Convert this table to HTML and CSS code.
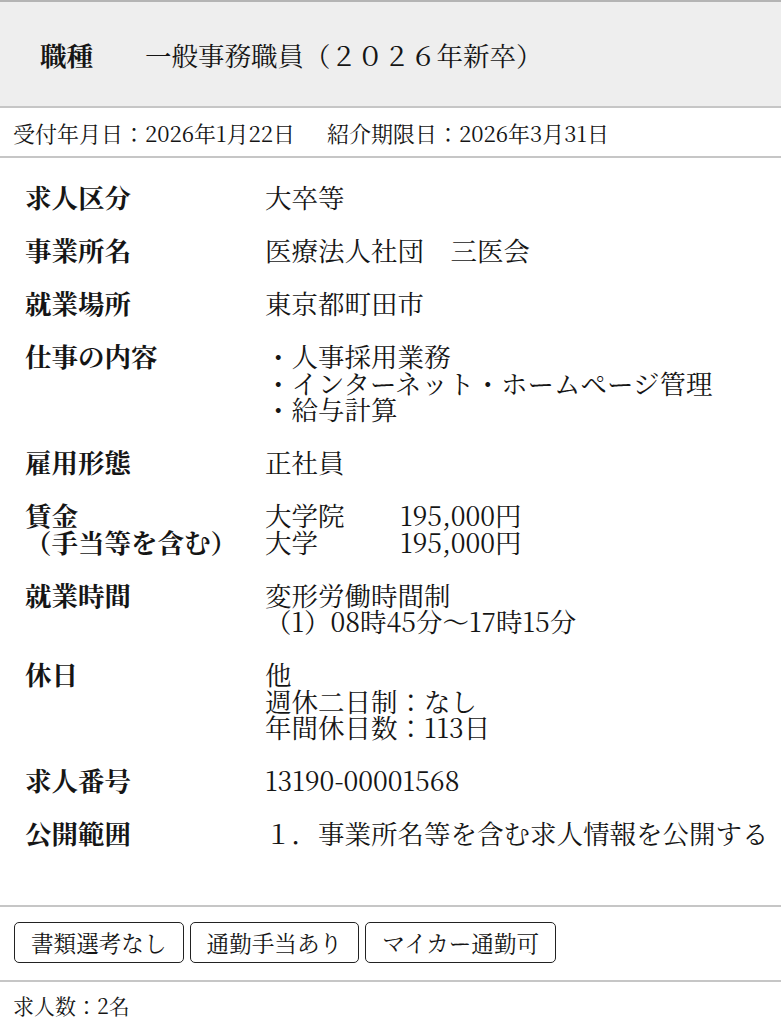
FILE: index.html
```html
<!DOCTYPE html>
<html lang="ja">
<head>
<meta charset="utf-8">
<title>求人情報</title>
<link rel="stylesheet" href="styles.css">
</head>
<body>
<div class="card">
  <div class="title">
    <span class="title-label">職種</span>
    <span class="title-value">一般事務職員（２０２６年新卒）</span>
  </div>
  <div class="dates">
    <span>受付年月日：2026年1月22日</span>
    <span class="date-second">紹介期限日：2026年3月31日</span>
  </div>
  <div class="details">
    <div class="label">求人区分</div>
    <div class="value">大卒等</div>

    <div class="label">事業所名</div>
    <div class="value">医療法人社団　三医会</div>

    <div class="label">就業場所</div>
    <div class="value">東京都町田市</div>

    <div class="label">仕事の内容</div>
    <div class="value">・人事採用業務<br>・インターネット・ホームページ管理<br>・給与計算</div>

    <div class="label">雇用形態</div>
    <div class="value">正社員</div>

    <div class="label">賃金<br>（手当等を含む）</div>
    <div class="value">
      <div class="wage"><span class="wage-name">大学院</span><span>195,000円</span></div>
      <div class="wage"><span class="wage-name">大学</span><span>195,000円</span></div>
    </div>

    <div class="label">就業時間</div>
    <div class="value">変形労働時間制<br>（1）08時45分〜17時15分</div>

    <div class="label">休日</div>
    <div class="value">他<br>週休二日制：なし<br>年間休日数：113日</div>

    <div class="label">求人番号</div>
    <div class="value">13190-00001568</div>

    <div class="label">公開範囲</div>
    <div class="value">１．事業所名等を含む求人情報を公開する</div>
  </div>
  <div class="tags">
    <span class="tag">書類選考なし</span>
    <span class="tag">通勤手当あり</span>
    <span class="tag">マイカー通勤可</span>
  </div>
  <div class="count">求人数：2名</div>
</div>
</body>
</html>
```
FILE: styles.css
```css
html, body {
  margin: 0;
  padding: 0;
  background: #ffffff;
}
body {
  font-family: "Noto Serif CJK JP", "IPAexMincho", "IPAMincho", "Liberation Serif", "Noto Sans CJK JP", serif;
  color: #151515;
}
.card {
  width: 781px;
}
.title {
  display: flex;
  align-items: center;
  height: 104px;
  background: #eeeeee;
  border-top: 2px solid #b4b4b4;
  border-bottom: 2px solid #c6c6c6;
  padding-left: 40px;
  font-size: 26.5px;
}
.title-label {
  font-weight: bold;
  width: 105px;
}
.dates {
  display: flex;
  align-items: center;
  height: 48px;
  padding-left: 13px;
  font-size: 22px;
  border-bottom: 2px solid #c6c6c6;
}
.date-second {
  margin-left: 32px;
}
.details {
  display: grid;
  grid-template-columns: 240px 1fr;
  row-gap: 26.5px;
  padding: 26px 0 58px 25px;
  font-size: 26.5px;
  line-height: 26.5px;
  border-bottom: 2px solid #c6c6c6;
}
.label {
  font-weight: bold;
}
.wage {
  display: flex;
}
.wage-name {
  width: 135px;
}
.tags {
  display: flex;
  gap: 6px;
  padding: 15px 14px 17px;
  border-bottom: 2px solid #c6c6c6;
}
.tag {
  display: flex;
  align-items: center;
  height: 39px;
  padding: 0 16px;
  border: 1.5px solid #222222;
  border-radius: 5px;
  font-size: 22.6px;
}
.count {
  padding: 8px 13px;
  font-size: 21px;
}
```
